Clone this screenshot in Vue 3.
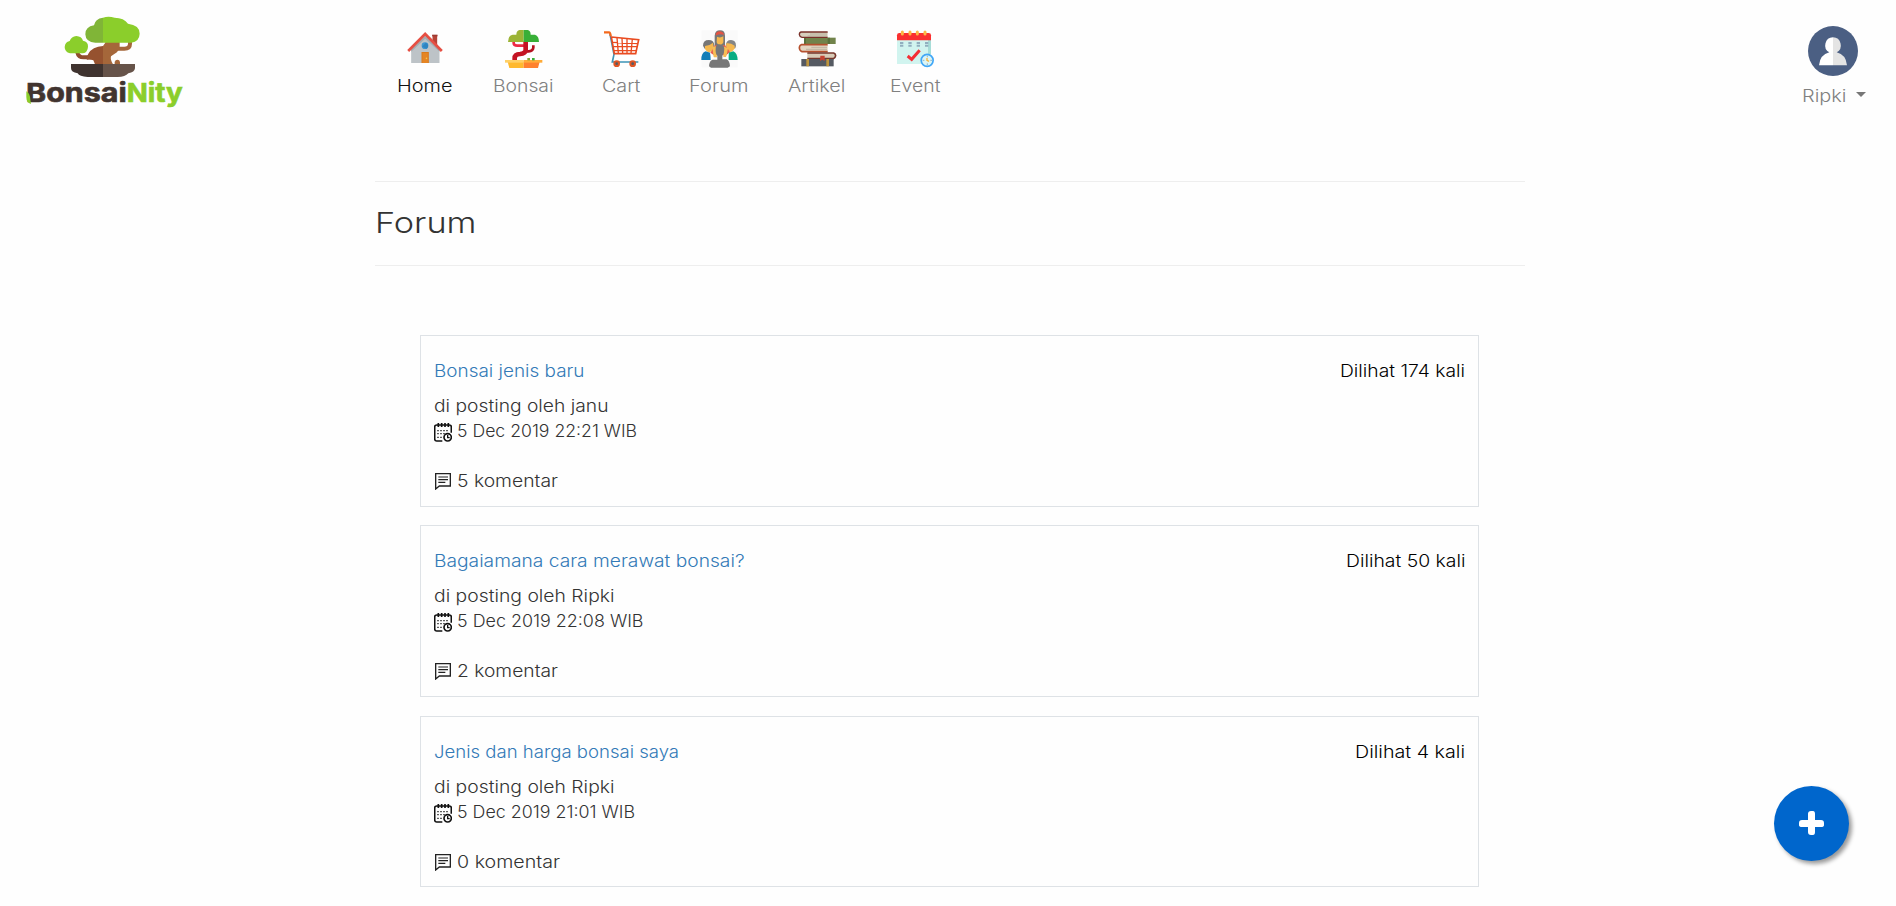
<script setup>
const nav = [
  { label: 'Home', icon: 'home', width: 55.5, active: true },
  { label: 'Bonsai', icon: 'bonsai', width: 60.5 },
  { label: 'Cart', icon: 'cart', width: 38.5 },
  { label: 'Forum', icon: 'forum', width: 59.5 },
  { label: 'Artikel', icon: 'artikel', width: 57.5 },
  { label: 'Event', icon: 'event', width: 50.5 }
]

const threads = [
  { title: 'Bonsai jenis baru', tw: 150.5, author: 'di posting oleh janu', aw: 174.5, date: '5 Dec 2019 22:21 WIB', dw: 180, comments: '5 komentar', cw: 101, views: 'Dilihat 174 kali', vw: 125 },
  { title: 'Bagaiamana cara merawat bonsai?', tw: 310.5, author: 'di posting oleh Ripki', aw: 180.5, date: '5 Dec 2019 22:08 WIB', dw: 186.5, comments: '2 komentar', cw: 101, views: 'Dilihat 50 kali', vw: 119.5 },
  { title: 'Jenis dan harga bonsai saya', tw: 245, author: 'di posting oleh Ripki', aw: 180.5, date: '5 Dec 2019 21:01 WIB', dw: 178, comments: '0 komentar', cw: 103, views: 'Dilihat 4 kali', vw: 110 }
]

// Widens the letterforms of a label so that it fills the given width.
const vExtend = {
  mounted(el, { value }) {
    const natural = el.getBoundingClientRect().width
    el.style.transform = `scaleX(${(value / natural).toFixed(4)})`
    el.style.marginRight = `${(value - natural).toFixed(2)}px`
  }
}
</script>

<template>
  <div class="page">
    <header class="topbar">
      <svg class="logo" viewBox="0 0 540 330" aria-label="BonsaiNity">
        <path d="M187 133Q190 148 206 148H240" fill="none" stroke="#8f4c2c" stroke-width="12" />
        <path d="M345 98V107Q345 122 328 122H300" fill="none" stroke="#a5673a" stroke-width="12" />
        <path d="M264 114Q232 116 220 137Q212 151 216 155Q226 153 235 157L240 169H264Z" fill="#96522f" />
        <path d="M264 114L271 104V98H314V116Q312 130 299 137L288 145Q285 154 294 169H264Z" fill="#a5673a" />
        <path d="M299 169V162Q301 155 307 155Q314 155 315 162V169Z" fill="#a5673a" />
        <path d="M264 29Q240 32 237 52Q211 56 211 79Q212 103 241 104H264Z" fill="#80b537" />
        <path d="M264 29Q280 24 299 29Q327 29 339 47Q374 51 374 77Q373 101 349 104H264Z" fill="#8bce2b" />
        <path d="M184 84Q200 85 204 98Q220 101 219 116Q218 133 204 136H165Q149 132 149 117Q150 102 164 99Q169 85 184 84Z" fill="#8bce2b" />
        <path d="M168 168H264V207H218Q193 206 188 196Q168 193 168 180Z" fill="#3f332f" />
        <path d="M264 168H360V181Q359 193 340 196Q331 207 308 207H264Z" fill="#665349" />
        <text x="33" y="282" class="brand" textLength="302" lengthAdjust="spacingAndGlyphs" fill="#41342f" stroke="#41342f">Bonsai</text>
        <text x="335" y="282" class="brand" textLength="168" lengthAdjust="spacingAndGlyphs" fill="#8bce2b" stroke="#8bce2b">Nity</text>
        <path d="M34 250Q45 256 46 275L48 288Q34 284 34 267Z" fill="#8bce2b" />
      </svg>

      <nav class="menu">
        <a v-for="item in nav" :key="item.label" class="menu-item" :class="{ active: item.active }">
          <svg v-if="item.icon === 'home'" class="icon" viewBox="76.5 24 120 120">
            <rect x="159" y="45" width="14" height="32" fill="#b54438" /><rect x="158" y="44" width="16" height="5" fill="#9e3931" />
            <path d="M95 89L137 49L180 89V129H95Z" fill="#bdc3c7" />
            <path d="M95 95L137 56L180 95V87L137 47L95 87Z" fill="#a3abb0" />
            <path d="M86 93L137 42L187 93" fill="none" stroke="#e64f43" stroke-width="8" />
            <circle cx="136.500" cy="77" r="10" fill="#3c97d3" /><path d="M128 80L139 68A10 10 0 0 1 141 86Z" fill="#2f84c0" />
            <rect x="126" y="96" width="22" height="33" fill="#d97a1c" /><rect x="129" y="99" width="16" height="30" fill="#e58524" />
            <circle cx="141" cy="115" r="2.500" fill="#f5c54b" />
          </svg>
          <svg v-else-if="item.icon === 'bonsai'" class="icon" viewBox="369 24 120 120">
            <path d="M401 65V69Q401 77 412 77H432" fill="none" stroke="#ee2944" stroke-width="8" />
            <path d="M460 76V83Q459 93 446 94H440" fill="none" stroke="#b5101f" stroke-width="8" />
            <path d="M437 64V91Q436 101 420 102Q404 102 404 115V121" fill="none" stroke="#c41423" stroke-width="14" />
            <path d="M431 30H419Q409 32 409 44H398Q384 47 384 66H431Z" fill="#9cb436" />
            <path d="M431 30H443Q452 32 452 44H465Q477 48 477 66H431Z" fill="#38af37" />
            <path d="M383 125H431V144H388Z" fill="#ffb92e" /><path d="M431 125H479L474 144H431Z" fill="#ff812e" />
            <rect x="375" y="120" width="56" height="8" fill="#ffd066" /><rect x="431" y="120" width="56" height="8" fill="#ffab38" />
            <rect x="442" y="114" width="8" height="7" fill="#83a937" /><rect x="456" y="114" width="8" height="7" fill="#38af37" />
          </svg>
          <svg v-else-if="item.icon === 'cart'" class="icon" viewBox="63 24 120 120">
            <path d="M90 42L102 103L97 126H175" fill="none" stroke="#3d94b7" stroke-width="5" />
            <path d="M72 37H87Q91 37 92 48" fill="none" stroke="#f4691c" stroke-width="7" />
            <path d="M94 51L176 59L167 101H103Z" fill="#fff" stroke="#e94b20" stroke-width="5" />
            <path d="M98 67L174 71M100 80H171M102 92H168M111 53L115 100M126 54L128 100M141 56V100M157 57L153 100" fill="none" stroke="#e94b20" stroke-width="4" />
            <circle cx="110" cy="131" r="10" fill="#df5625" /><circle cx="110" cy="131" r="4" fill="#525b65" />
            <circle cx="158" cy="131" r="10" fill="#df5625" /><circle cx="158" cy="131" r="4" fill="#525b65" />
          </svg>
          <svg v-else-if="item.icon === 'forum'" class="icon" viewBox="357 24 120 120">
            <rect x="365" y="31" width="108" height="111" fill="#fafafa" />
            <path d="M404 88V47Q405 31 420 31Q435 31 435 47V88Z" fill="#777" />
            <path d="M407 46Q407 34 420 34Q432 35 432 47L430 44Q419 41 409 46Z" fill="#e45343" />
            <path d="M411 50Q421 55 430 49V67Q427 75 420 76Q412 75 410 67Z" fill="#f5b84f" />
            <path d="M369 77Q369 60 386 60Q402 60 403 76L399 86H374Z" fill="#777" />
            <path d="M375 78Q389 77 399 68L401 82Q399 93 387 98Q378 93 375 87Z" fill="#f5b84f" />
            <path d="M437 77Q438 60 453 60Q468 61 468 77L466 85L440 85Z" fill="#858585" />
            <path d="M439 70Q451 68 464 77V85Q458 96 451 96Q440 92 438 84Z" fill="#f5b84f" />
            <path d="M391 98L405 76H435L451 97L438 106H402Z" fill="#e9604c" />
            <path d="M397 82L408 79L411 112H401ZM432 80L444 84L439 111H430Z" fill="#f6be55" />
            <path d="M364 120Q364 97 377 94L390 98L397 120Z" fill="#137eb8" />
            <path d="M441 120L446 98L460 94Q472 99 473 120Z" fill="#08ad83" />
            <path d="M391 98L402 113L398 120H392ZM446 98L438 111L440 120H446Z" fill="#fff" />
            <path d="M407 87Q406 73 419 73Q432 74 433 86Q433 100 427 107V118H440Q449 123 450 139L443 143H393L387 139Q388 121 398 119H412V107Q406 101 407 87Z" fill="#777" />
          </svg>
          <svg v-else-if="item.icon === 'artikel'" class="icon" viewBox="81 24 120 120">
            <rect x="102" y="53" width="95" height="19" fill="#71834b" /><path d="M173 53H180V72H173ZM102 53H108V72H102Z" fill="#59703b" />
            <path d="M173 36H94Q88 37 88 44Q89 51 96 52H173Z" fill="#d7cfbd" /><path d="M173 36H94Q88 37 88 44Q89 51 96 52H173" fill="none" stroke="#7a3029" stroke-width="4" />
            <path d="M120 42H171M113 48H171" stroke="#aaa190" stroke-width="2" />
            <path d="M173 74H94Q88 76 88 84Q89 93 96 95H173Z" fill="#e2d5c0" /><path d="M173 74H94Q88 76 88 84Q89 93 96 95H173" fill="none" stroke="#b6512e" stroke-width="5" />
            <path d="M124 82H171M108 88H171" stroke="#aaa190" stroke-width="2" />
            <path d="M112 99H191Q197 101 197 107Q196 114 190 116H112Z" fill="#d8cbb7" /><path d="M112 99H191Q197 101 197 107Q196 114 190 116H112" fill="none" stroke="#76372c" stroke-width="5" />
            <rect x="94" y="117" width="97" height="22" fill="#555a62" /><path d="M109 117H117V139H109ZM169 117H177V139H169Z" fill="#bd943c" />
            <path d="M151 107H164V123L157 119L150 123Z" fill="#c54331" />
          </svg>
          <svg v-else class="icon" viewBox="375 24 120 120">
            <path d="M381 58H483V132H381Z" fill="#d1f4ef" /><path d="M474 60H483V102H474Z" fill="#a7ddd8" />
            <path d="M381 61V46Q381 39 388 39H476Q483 39 483 46V61Z" fill="#fa3030" />
            <path d="M397 36V42M420 36V42M442 36V42M465 36V42" stroke="#fdb944" stroke-width="9" stroke-linecap="round" />
            <path d="M390 69H475M390 77H475" stroke="#91afbf" stroke-width="6" stroke-dasharray="10 15" />
            <path d="M413 108L425 118L449 91" fill="none" stroke="#f42f35" stroke-width="9" />
            <circle cx="471.500" cy="121" r="18" fill="#dcf5f5" stroke="#41a7f7" stroke-width="5" />
            <path d="M472 107V112M472 130V135M458 121H463M481 121H486" stroke="#6c91aa" stroke-width="2" />
            <path d="M471 114V121L477 124" fill="none" stroke="#f6b43c" stroke-width="4" />
          </svg>
          <span v-extend="item.width" class="ext">{{ item.label }}</span>
        </a>
      </nav>

      <div class="account">
        <svg class="avatar" viewBox="114 47 150 150">
          <circle cx="189" cy="122" r="75" fill="#4b5f83" />
          <path d="M189 81A24 24 0 0 0 178 126Q150 133 147 165H189Z" fill="#fff" />
          <path d="M189 81A24 24 0 0 1 200 126Q228 133 231 165H189Z" fill="#e4e4e4" />
        </svg>
        <div class="account-name"><span v-extend="44.5" class="ext">Ripki</span><i class="caret"></i></div>
      </div>
    </header>

    <main class="content">
      <div class="heading"><h1 v-extend="101.5" class="ext">Forum</h1></div>
      <section class="threads">
        <article v-for="t in threads" :key="t.title" class="thread">
          <div class="title-row">
            <a v-extend="t.tw" class="title ext">{{ t.title }}</a>
            <span v-extend="t.vw" class="views ext">{{ t.views }}</span>
          </div>
          <div class="row"><span v-extend="t.aw" class="ext">{{ t.author }}</span></div>
          <div class="row">
            <svg class="small-icon" viewBox="0 0 54 57" fill="none" stroke="#111" stroke-width="5">
              <path d="M25 54H8Q2 54 2 47V12Q2 6 8 6H46Q52 6 52 12V29M13 0V12M23 0V12M33 0V12M43 0V12" />
              <path d="M10 23H44M10 32H32M10 43H27" stroke-width="4" stroke-dasharray="4 5" />
              <circle cx="41" cy="43" r="11" /><path d="M41 36V44H47" stroke-width="4" />
            </svg>
            <span v-extend="t.dw" class="ext">{{ t.date }}</span>
          </div>
          <div class="row comments">
            <svg class="small-icon" viewBox="0 0 54 57" fill="none" stroke="#222" stroke-width="4">
              <path d="M5 8H49V45H16L5 54Z" /><path d="M13 18H42M13 26H42M13 34H34" stroke-width="3.500" />
            </svg>
            <span v-extend="t.cw" class="ext">{{ t.comments }}</span>
          </div>
        </article>
      </section>
    </main>

    <button class="fab" aria-label="Tambah">
      <svg viewBox="0 0 75 75"><path d="M34 28Q34 25 37 25H39Q41 25 41 28V34H47Q50 34 50 37V39Q50 41 47 41H41V46Q41 49 39 49H37Q34 49 34 46V41H28Q25 41 25 39V37Q25 34 28 34H34Z" fill="#fff" /></svg>
    </button>
  </div>
</template>

<style>
body {
  margin: 0;
  background: #fefefe;
}
</style>

<style scoped>
.page {
  box-sizing: border-box;
  height: 906px;
  overflow: hidden;
  font-family: Inter, "Open Sans", sans-serif;
  font-size: 16.800px;
  font-weight: 300;
  line-height: 25px;
  color: #333;
  white-space: nowrap;
}
.ext {
  display: inline-block;
  flex: none;
  transform-origin: 0 50%;
}
.topbar {
  display: flex;
  align-items: flex-start;
  height: 181px;
}
.logo {
  width: 180px;
  height: 110px;
  margin: 8px 0 0 15px;
}
.brand {
  font-family: Inter, sans-serif;
  font-size: 79px;
  font-weight: 700;
  stroke-width: 2;
}
.menu {
  display: flex;
  margin: 28px 0 0 181px;
}
.menu-item {
  display: flex;
  flex-direction: column;
  align-items: center;
  width: 98px;
  color: #808080;
}
.menu-item.active {
  color: #111;
}
.icon {
  width: 40px;
  height: 40px;
  margin-bottom: 6px;
}
.account {
  display: flex;
  flex-direction: column;
  width: 64px;
  margin: 26px 30px 0 auto;
}
.avatar {
  width: 50px;
  height: 50px;
  margin-left: 6px;
}
.account-name {
  display: flex;
  align-items: center;
  margin-top: 8px;
  color: #808080;
}
.caret {
  margin: -4px 0 0 9px;
  border: 5px solid transparent;
  border-top-color: #777;
  border-bottom: 0;
}
.content {
  width: 1150px;
  margin-left: 375px;
}
.heading {
  box-sizing: border-box;
  height: 85px;
  padding-top: 21px;
  border-top: 1px solid #eee;
  border-bottom: 1px solid #eee;
}
h1 {
  margin: 0;
  font-size: 29px;
  font-weight: 300;
  line-height: 40px;
}
.threads {
  display: flex;
  flex-direction: column;
  gap: 18.700px;
  margin: 69px 46px 0 45px;
}
.thread {
  box-sizing: border-box;
  height: 171.600px;
  padding: 23px 13px 0;
  border: 1px solid #dee2e6;
}
.title-row {
  display: flex;
  justify-content: space-between;
  margin-bottom: 10px;
}
.title {
  color: #337ab7;
}
.views {
  color: #000;
}
.row {
  display: flex;
}
.comments {
  margin-top: 25px;
}
.small-icon {
  width: 18px;
  height: 19px;
  margin: 4px 5px 0 0;
}
.comments .small-icon {
  margin-top: 2px;
}
.fab {
  position: fixed;
  right: 47px;
  bottom: 45px;
  width: 75px;
  height: 75px;
  padding: 0;
  border: 0;
  border-radius: 50%;
  background: #06c;
  box-shadow: 3px 3px 4px #999;
}
.fab svg {
  display: block;
}
</style>
